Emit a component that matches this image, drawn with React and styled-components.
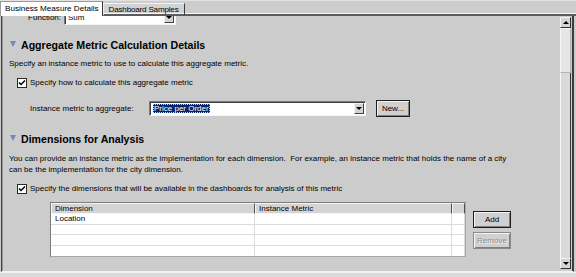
import React from 'react';
import styled, { createGlobalStyle } from 'styled-components';

const GlobalStyle = createGlobalStyle`
  html, body {
    margin: 0;
    padding: 0;
    background: #cdcdcd;
  }
  body {
    font-family: "Liberation Sans", Arial, sans-serif;
    font-size: 8px;
    color: #000;
  }
`;

/* Window frame */

const Window = styled.div`
  width: 576px;
  height: 277px;
  display: grid;
  grid-template-rows: 16px 256px 5px;
  overflow: hidden;
  background: #cdcdcd;
`;

const TabStrip = styled.div`
  display: flex;
  align-items: flex-end;
  background: #cdcdcd;
  border-top: 1px solid #e2e2e2;
`;

const Tab = styled.div`
  height: ${p => (p.$active ? '15px' : '13px')};
  padding: 0 ${p => (p.$active ? '3px' : '5px')} 0 ${p => (p.$active ? '4px' : '5px')};
  box-sizing: border-box;
  display: flex;
  align-items: center;
  font-size: 8.1px;
  white-space: nowrap;
  background: ${p => (p.$active ? '#ffffff' : '#d2d2d2')};
  border-left: 1px solid ${p => (p.$active ? '#9a9a9a' : '#ececec')};
  border-top: 1px solid ${p => (p.$active ? '#9a9a9a' : '#f2f2f2')};
  border-right: 1px solid #3c3c3c;
  border-bottom: ${p => (p.$active ? 'none' : '2px solid #5c5c5c')};
  box-shadow: ${p => (p.$active ? 'none' : 'inset 0 -1px 0 #f6f6f6')};
  padding-bottom: ${p => (p.$active ? '1px' : '0')};
  letter-spacing: ${p => (p.$active ? '0' : '-0.2px')};
`;

const StripFill = styled.div`
  flex: 1;
  height: 3px;
  border-bottom: 2px solid #5c5c5c;
  box-shadow: inset 0 -1px 0 #f6f6f6;
`;

const Panel = styled.div`
  display: flex;
  border-left: 1px solid #3c3c3c;
  border-right: 1px solid #3c3c3c;
  border-bottom: 1px solid #f2f2f2;
  margin-left: 1px;
  margin-right: 2px;
  background: #cccccc;
`;

const Viewport = styled.div`
  flex: 1;
  overflow: hidden;
  border-left: 1px solid #9a9a9a;
`;

/* the form is scrolled down a little: the Function row sits under the tabs */
const Content = styled.div`
  margin-top: -6px;
  display: flex;
  flex-direction: column;
`;

const StatusStrip = styled.div`
  background: #dadada;
  border-top: 1px solid #f4f4f4;
`;

/* Form parts */

const FieldRow = styled.div`
  display: flex;
  align-items: center;
  gap: ${p => p.$gap || 3}px;
  padding-left: ${p => p.$indent || 0}px;
  margin-top: ${p => p.$top || 0}px;
  height: ${p => p.$height || 15}px;
`;

const FieldLabel = styled.span`
  width: ${p => p.$width}px;
  text-align: ${p => p.$align || 'left'};
  white-space: nowrap;
`;

const Combo = styled.div`
  width: ${p => p.$width}px;
  height: 15px;
  box-sizing: border-box;
  display: flex;
  align-items: center;
  background: #fff;
  border-top: 1px solid #7a7a7a;
  border-left: 1px solid #7a7a7a;
  border-right: 1px solid #f4f4f4;
  border-bottom: 1px solid #f4f4f4;
  box-shadow: inset 1px 1px 0 #404040;
  padding: 0 1px 0 3px;
`;

const ComboValue = styled.span`
  flex: 1;
  white-space: nowrap;
`;

const Selected = styled.span`
  background: #0a246a;
  color: #fff;
  padding: 0 1px;
  outline: 1px dotted #d0d0d0;
  outline-offset: -1px;
`;

const DropButton = styled.div`
  width: 10px;
  height: 11px;
  background: #d4d4d4;
  border: 1px solid;
  border-color: #f4f4f4 #404040 #404040 #f4f4f4;
  box-sizing: border-box;
  display: flex;
  align-items: center;
  justify-content: center;
`;

const Arrow = styled.span`
  width: 0;
  height: 0;
  border-left: 3px solid transparent;
  border-right: 3px solid transparent;
  ${p => (p.$up ? 'border-bottom: 3px solid #000;' : 'border-top: 3px solid #000;')}
`;

const PushButton = styled.div`
  width: ${p => p.$width}px;
  height: 17px;
  box-sizing: border-box;
  display: flex;
  align-items: center;
  justify-content: center;
  background: #d0d0d0;
  border: 1px solid ${p => (p.$disabled ? '#8a8a8a' : '#1e1e1e')};
  box-shadow: inset 1px 1px 0 #f4f4f4, inset -1px -1px 0 #808080;
  color: ${p => (p.$disabled ? '#8e8e8e' : '#000')};
  text-shadow: ${p => (p.$disabled ? '1px 1px 0 #f2f2f2' : 'none')};
`;

const SectionHeader = styled.div`
  display: flex;
  align-items: center;
  gap: 5px;
  height: 14px;
  padding-left: 7px;
  margin-top: ${p => p.$top || 15}px;
  font-size: 10.6px;
  font-weight: bold;
`;

const Triangle = styled.span`
  width: 0;
  height: 0;
  border-left: 3.5px solid transparent;
  border-right: 3.5px solid transparent;
  border-top: 6px solid #7585c0;
  margin-top: -3px;
`;

const Para = styled.p`
  margin: ${p => p.$top || 6}px 0 0;
  padding-left: 6px;
  line-height: 11px;
`;

const CheckRow = styled.label`
  display: flex;
  align-items: center;
  gap: 3px;
  padding-left: 14px;
  margin-top: 8px;
  height: 11px;
`;

const CheckBox = styled.span`
  width: 10px;
  height: 10px;
  box-sizing: border-box;
  background: #fff;
  border: 1px solid #2a2a2a;
  display: flex;
  align-items: center;
  justify-content: center;
`;

/* Table */

const TableArea = styled.div`
  display: flex;
  gap: 7px;
  padding-left: 47px;
  margin-top: 8px;
`;

const Grid = styled.div`
  width: 416px;
  box-sizing: border-box;
  border: 1px solid #7c7c7c;
  border-right-color: #a8a8a8;
  border-bottom-color: #a8a8a8;
  display: grid;
  grid-template-columns: 204px 197px 1fr;
  background: #fff;
`;

const HeadCell = styled.div`
  height: 11px;
  box-sizing: border-box;
  padding-left: 4px;
  display: flex;
  align-items: center;
  background: #d4d4d4;
  border-top: 1px solid #f4f4f4;
  border-bottom: 1px solid #f4f4f4;
  border-right: 1px solid #505050;
  box-shadow: inset 1px 0 0 #f4f4f4;
`;

const Cell = styled.div`
  height: 10.5px;
  box-sizing: border-box;
  padding-left: 4px;
  display: flex;
  align-items: center;
  border-bottom: 1px solid #dcdcdc;
  border-right: 1px solid #dcdcdc;
  &:nth-last-child(-n + 3) {
    border-bottom: none;
  }
`;

const ButtonColumn = styled.div`
  display: flex;
  flex-direction: column;
  gap: 4px;
  padding-top: 9px;
`;

/* Scrollbar */

const ScrollBar = styled.div`
  width: 14px;
  display: flex;
  flex-direction: column;
  padding: 1px 1px 2px 1px;
  box-sizing: border-box;
  border-right: 1px solid #3c3c3c;
`;

const ScrollButton = styled.div`
  height: 11px;
  background: #d4d4d4;
  border: 1px solid;
  border-color: #f4f4f4 #303030 #303030 #f4f4f4;
  box-sizing: border-box;
  display: flex;
  align-items: center;
  justify-content: center;
`;

const Thumb = styled.div`
  height: 45px;
  background: #e6e6e6;
  border: 1px solid;
  border-color: #f6f6f6 #b4b4b4 #b4b4b4 #f6f6f6;
  box-sizing: border-box;
`;

const Track = styled.div`
  flex: 1;
  background: #dadada;
  border-left: 1px solid #f8f8f8;
  border-right: 1px solid #3a3a3a;
`;

const rows = [['Location', ''], ['', ''], ['', ''], ['', '']];

const Check = () => (
  <CheckBox>
    <svg width="8" height="8" viewBox="0 0 8 8">
      <path d="M1 3.5 L3 5.5 L7 1.5" stroke="#000" strokeWidth="1.5" fill="none" />
    </svg>
  </CheckBox>
);

export default function App() {
  return (
    <>
      <GlobalStyle />
      <Window>
        <TabStrip>
          <Tab $active>Business Measure Details</Tab>
          <Tab>Dashboard Samples</Tab>
          <StripFill />
        </TabStrip>
        <Panel>
          <Viewport>
            <Content>
              <FieldRow $top={0}>
                <FieldLabel $width={58} $align="right">Function:</FieldLabel>
                <Combo $width={112}>
                  <ComboValue>Sum</ComboValue>
                  <DropButton><Arrow /></DropButton>
                </Combo>
              </FieldRow>

              <SectionHeader $top={13}>
                <Triangle />
                Aggregate Metric Calculation Details
              </SectionHeader>
              <Para>Specify an instance metric to use to calculate this aggregate metric.</Para>
              <CheckRow>
                <Check />
                Specify how to calculate this aggregate metric
              </CheckRow>
              <FieldRow $indent={27} $top={12} $height={17} $gap={0}>
                <FieldLabel $width={116}>Instance metric to aggregate:</FieldLabel>
                <Combo $width={217}>
                  <ComboValue><Selected>Price per Order</Selected></ComboValue>
                  <DropButton><Arrow /></DropButton>
                </Combo>
                <span style={{ width: 4 }} />
                <PushButton $width={34}>New...</PushButton>
              </FieldRow>

              <SectionHeader>
                <Triangle />
                Dimensions for Analysis
              </SectionHeader>
              <Para $top={7}>
                You can provide an instance metric as the implementation for each dimension.&nbsp; For example, an instance metric that holds the name of a city
                <br />
                can be the implementation for the city dimension.
              </Para>
              <CheckRow>
                <Check />
                Specify the dimensions that will be available in the dashboards for analysis of this metric
              </CheckRow>

              <TableArea>
                <Grid>
                  <HeadCell>Dimension</HeadCell>
                  <HeadCell>Instance Metric</HeadCell>
                  <HeadCell />
                  {rows.map((r, i) => (
                    <React.Fragment key={i}>
                      <Cell>{r[0]}</Cell>
                      <Cell>{r[1]}</Cell>
                      <Cell />
                    </React.Fragment>
                  ))}
                </Grid>
                <ButtonColumn>
                  <PushButton $width={38}>Add</PushButton>
                  <PushButton $width={38} $disabled>Remove</PushButton>
                </ButtonColumn>
              </TableArea>
            </Content>
          </Viewport>
          <ScrollBar>
            <ScrollButton><Arrow $up /></ScrollButton>
            <Thumb />
            <Track />
            <ScrollButton><Arrow /></ScrollButton>
          </ScrollBar>
        </Panel>
        <StatusStrip />
      </Window>
    </>
  );
}
